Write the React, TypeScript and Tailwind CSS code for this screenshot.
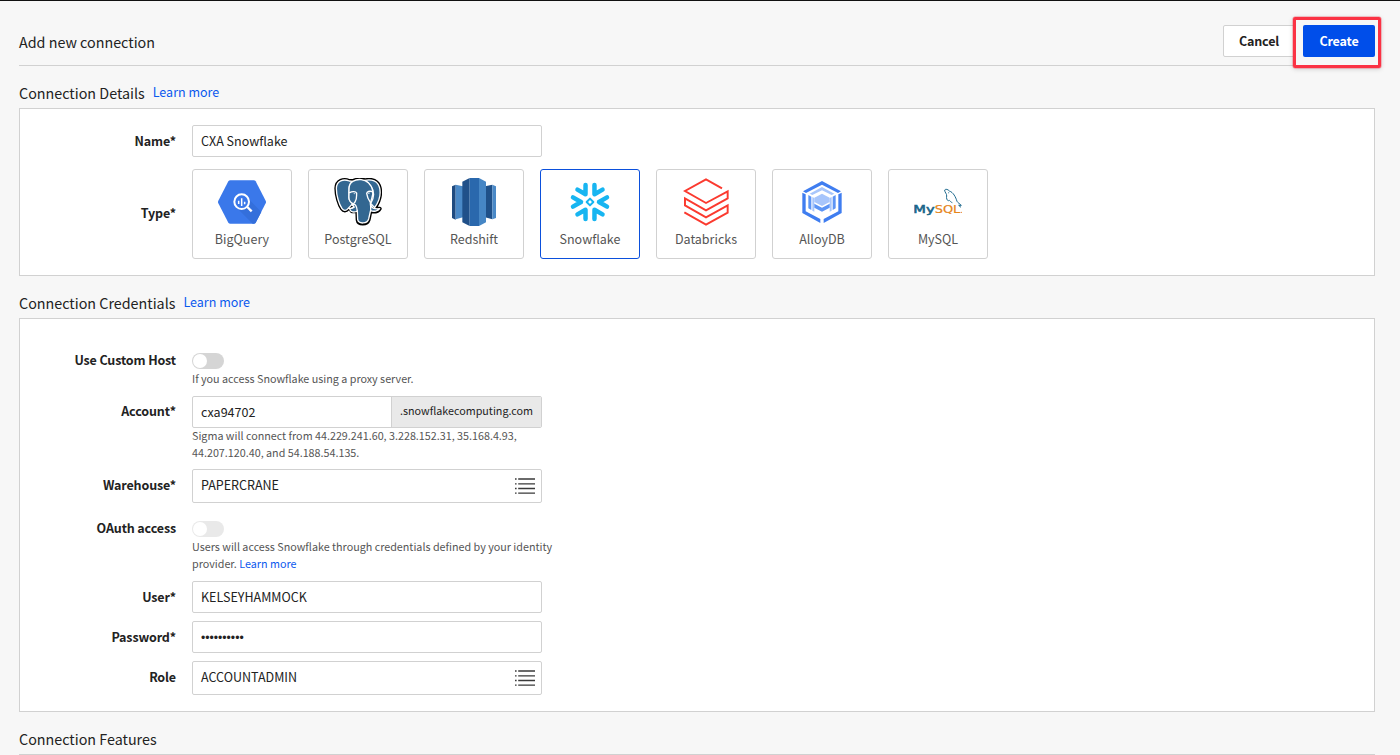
import type { ReactNode } from 'react';

const BigQueryIcon = () => (
  <svg viewBox="84 39 144 144" className="size-12">
    <path d="M121 46H191Q195 46 197 49L227 107Q229 111 227 115L197 173Q195 176 191 176H121Q117 176 115 173L85 115Q83 111 85 107L115 49Q117 46 121 46Z" fill="#3a78ea" />
    <path d="M138 126L188 176H191Q195 176 197 173L214 141L173 99Q178 115 168 124Q155 134 138 126Z" fill="#346fdb" />
    <circle cx="155" cy="110" r="22" fill="none" stroke="#fff" strokeWidth="6" />
    <path d="M172 126L185 139" stroke="#fff" strokeWidth="7" />
    <path d="M146 107V117M155 100V123M164 110V118" stroke="#fff" strokeWidth="4.5" />
  </svg>
);

const PostgresIcon = () => (
  <svg viewBox="432 39 144 144" className="size-12" strokeLinejoin="round" strokeLinecap="round">
    <g fill="#336791" stroke="#000" strokeWidth="12">
      <path d="M478 48C460 41 440 47 439 70C439 91 447 118 456 131C461 138 468 138 474 131L482 123L480 131L486 139L502 138L503 165C505 179 531 180 536 164L541 139C553 141 565 138 569 131C563 131 557 131 555 128C566 111 573 87 569 69C564 48 545 41 526 46C512 42 498 44 489 48Z" />
    </g>
    <g fill="#336791" stroke="#fff" strokeWidth="4">
      <path d="M478 48C460 41 440 47 439 70C439 91 447 118 456 131C461 138 468 138 474 131L488 116C477 108 476 101 477 87C477 70 475 59 488 49Z" />
      <path d="M524 46C545 41 564 48 569 69C573 87 566 111 554 128L542 115C551 101 554 82 544 65C540 57 533 50 524 46Z" />
      <path d="M488 49C504 40 524 43 535 53C549 68 552 84 545 101L541 116L543 131L536 162C532 177 506 178 503 164L502 138C492 144 483 140 480 135C478 130 488 130 491 127L488 116C476 108 476 101 477 87C477 70 475 58 488 49Z" />
      <path d="M542 117C543 129 552 133 569 131C564 138 551 141 542 137Z" />
      <path d="M479 83C487 78 497 79 500 84C499 93 502 102 495 111C492 115 489 118 487 121M546 80C539 77 531 80 530 85C531 93 534 102 541 112M487 120C496 114 500 123 502 138M476 130C483 131 490 128 493 126" fill="none" />
    </g>
    <path d="M490 84L497 86L493 88ZM533 84L540 83L537 87Z" fill="#fff" />
  </svg>
);

const RedshiftIcon = () => (
  <svg viewBox="90 39 144 144" className="size-12">
    <path d="M96 64L107 59V164L96 159Z" fill="#1f4b80" />
    <path d="M107 59L129 64V157L107 163Z" fill="#4a89c7" />
    <path d="M217 59L195 64V157L217 163Z" fill="#1f5089" />
    <path d="M217 59L228 64V159L217 163Z" fill="#4a89c7" />
    <path d="M127 50L149 39V183L127 172Z" fill="#205089" />
    <path d="M149 39H177V183H149Z" fill="#2a68ad" />
    <path d="M177 39L198 50V172L177 183Z" fill="#4686c5" />
  </svg>
);

const SnowflakeIcon = () => (
  <svg viewBox="438 39 144 144" className="size-12" fill="none" stroke="#17b5f1" strokeLinecap="round" strokeLinejoin="round">
    {[0, 60, 120, 180, 240, 300].map((a) => (
      <path key={a} d="M459 97L483 111L459 125" strokeWidth="13.5" transform={`rotate(${a} 510 111)`} />
    ))}
    <path d="M510 101L520 111L510 121L500 111Z" strokeWidth="6" />
  </svg>
);

const DatabricksIcon = () => (
  <svg viewBox="96 39 144 144" className="size-12" fill="none" stroke="#fb3a2f" strokeWidth="5.8">
    <path d="M216 70L168 43L105 78L168 114L233 79V100L168 136L105 100V121L168 157L233 121V143L168 179L103 142" />
  </svg>
);

const AlloyIcon = () => (
  <svg viewBox="444 39 144 144" className="size-12">
    <g fill="#3f7df0">
      <path d="M516 48L573 79L564 84L516 59L468 84L459 79Z" />
      <path d="M457 83L467 88V139L511 162V174L457 144Z" />
      <path d="M575 83L565 88V139L521 162V174L575 144Z" />
    </g>
    <path d="M516 66L553 86L545 90L516 76L487 90L479 86Z" fill="#a7c5fb" />
    <path d="M475 90L484 95V135L475 130ZM557 90L548 95V135L557 130Z" fill="#5c94f5" />
    <path d="M487 96L493 99V140L487 137ZM545 96L539 99V140L545 137Z" fill="#a7c5fb" />
    <path d="M516 86L539 98V111L516 123L493 111V98Z" fill="#a7c5fb" />
    <path d="M493 116L516 128L539 116V128L516 140L493 128Z" fill="#5c94f5" />
  </svg>
);

const MySqlIcon = () => (
  <svg viewBox="102 39 144 144" className="size-12" fontFamily="'DejaVu Sans', sans-serif" fontSize="31">
    <text x="100" y="143" fill="#17658a" stroke="#17658a" strokeWidth="1.6" textLength="64" lengthAdjust="spacingAndGlyphs">My</text>
    <text x="164" y="143" fill="#e6851a" stroke="#e6851a" strokeWidth="0.6" textLength="77" lengthAdjust="spacingAndGlyphs">SQL</text>
    <circle cx="244" cy="142" r="2" fill="#e6851a" />
    <path d="M194 75C197 71 204 73 208 78C220 82 227 96 231 109C233 113 240 117 244 121L236 121L243 127M194 75C194 83 201 86 200 93C198 101 203 110 207 106C208 104 212 112 217 113" fill="none" stroke="#17658a" strokeWidth="2.9" />
    <circle cx="206" cy="83" r="1.6" fill="#17658a" />
  </svg>
);

const ListIcon = () => (
  <svg viewBox="0 0 20 16" className="h-4 w-5 shrink-0" stroke="#3a3a3a" strokeWidth="1.3">
    <path d="M3.2 1H20M3.2 5.8H20M3.2 10.5H20M3.2 15.2H20" />
    <path d="M0 1H1.6M0 5.8H1.6M0 10.5H1.6M0 15.2H1.6" />
  </svg>
);

const TYPES: { name: string; icon: ReactNode; selected?: boolean }[] = [
  { name: 'BigQuery', icon: <BigQueryIcon /> },
  { name: 'PostgreSQL', icon: <PostgresIcon /> },
  { name: 'Redshift', icon: <RedshiftIcon /> },
  { name: 'Snowflake', icon: <SnowflakeIcon />, selected: true },
  { name: 'Databricks', icon: <DatabricksIcon /> },
  { name: 'AlloyDB', icon: <AlloyIcon /> },
  { name: 'MySQL', icon: <MySqlIcon /> },
];

function Row({ label, className, labelClass = 'h-8', children }: { label: string; className?: string; labelClass?: string; children: ReactNode }) {
  return (
    <div className={`flex gap-4 ${className ?? ''}`}>
      <div className={`flex w-[156px] shrink-0 items-center justify-end text-[12.53px] font-bold tracking-[-0.14px] ${labelClass}`}>{label}</div>
      {children}
    </div>
  );
}

function Field({ value, list, masked }: { value: string; list?: boolean; masked?: boolean }) {
  return (
    <div className={`flex w-[350px] items-center justify-between rounded-xs border border-[#d1d1d1] bg-white pr-1.5 pl-2 text-[12.53px] ${list ? 'h-[34px]' : 'h-8'}`}>
      <span className={masked ? "pt-0.5 font-['Liberation_Sans',sans-serif] text-[12.2px]" : list ? 'pb-0.5' : ''}>{value}</span>
      {list && <ListIcon />}
    </div>
  );
}

function Toggle({ disabled }: { disabled?: boolean }) {
  return (
    <div className={`flex h-4 w-8 items-center rounded-full px-px ${disabled ? 'bg-[#e9e9e9]' : 'bg-[#d5d5d5]'}`}>
      <div className="size-3.5 rounded-full bg-white" />
    </div>
  );
}

function Heading({ title, className }: { title: string; className: string }) {
  return (
    <div className={`flex gap-2 ${className}`}>
      <h2 className="text-[14.32px] leading-5">{title}</h2>
      <a className="-mt-px text-[12.53px] leading-5 text-[#0b59ee]">Learn more</a>
    </div>
  );
}

export default function App() {
  return (
    <div className="h-[755px] overflow-hidden border-t border-[#111] bg-[#f7f7f7] pr-[25px] pl-[19px] font-['Noto_Sans_CJK_SC',sans-serif] leading-4 text-[#222]">
      <header className="flex h-[65px] items-start justify-between border-b border-[#d1d1d1] pt-6">
        <h1 className="mt-[7px] text-[14.32px] leading-5">Add new connection</h1>
        <div className="flex gap-2 text-[12.53px] font-bold tracking-[-0.14px]">
          <button className="h-8 w-[72px] rounded-xs border border-[#d1d1d1] bg-white">Cancel</button>
          <div className="relative">
            <button className="h-8 w-[72px] rounded-xs bg-[#004eea] text-white">Create</button>
            <div className="absolute -top-2 -left-2.5 h-[51px] w-[88px] rounded-[2px] border-3 border-[#fb3244] shadow-[0_0_0_0.5px_rgba(251,50,68,0.5),0_1px_5px_rgba(0,0,0,0.18)]" />
          </div>
        </div>
      </header>

      <Heading title="Connection Details" className="mt-[17px] h-[25px]" />
      <section className="h-[168px] border border-[#d1d1d1] bg-white pt-4">
        <Row label="Name*">
          <Field value="CXA Snowflake" />
        </Row>
        <Row label="Type*" className="mt-3" labelClass="h-[88px]">
          <div className="flex gap-4">
            {TYPES.map((t) => (
              <div key={t.name} className={`flex h-[90px] w-[100px] flex-col items-center rounded-[3px] border pt-2 ${t.selected ? 'border-[#0b50dc]' : 'border-[#d1d1d1]'}`}>
                {t.icon}
                <span className="mt-[5px] text-[12.53px] text-[#555]">{t.name}</span>
              </div>
            ))}
          </div>
        </Row>
      </section>

      <Heading title="Connection Credentials" className="mt-[17px] h-[25px]" />
      <section className="h-[394px] border border-[#d1d1d1] bg-white pt-[34px] text-[10.76px]">
        <Row label="Use Custom Host" labelClass="h-3.5">
          <div>
            <Toggle />
            <p className="mt-px mb-px leading-[17px] text-[#555]">If you access Snowflake using a proxy server.</p>
          </div>
        </Row>
        <Row label="Account*" className="mt-2" labelClass="h-[30px]">
          <div>
            <div className="flex h-8 w-[350px] overflow-hidden rounded-xs border border-[#d1d1d1]">
              <span className="flex grow items-center pl-2 text-[12.53px]">cxa94702</span>
              <span className="flex w-[150px] items-center justify-center border-l border-[#d1d1d1] bg-[#e9e9e9] pb-0.5">.snowflakecomputing.com</span>
            </div>
            <p className="-mt-px mb-px w-[350px] leading-[17px] text-[#555]">Sigma will connect from 44.229.241.60, 3.228.152.31, 35.168.4.93, 44.207.120.40, and 54.188.54.135.</p>
          </div>
        </Row>
        <Row label="Warehouse*" className="mt-[7px]">
          <Field value="PAPERCRANE" list />
        </Row>
        <Row label="OAuth access" className="mt-[18px]" labelClass="h-3.5">
          <div>
            <Toggle disabled />
            <p className="mt-px mb-px w-[370px] leading-[17px] text-[#555]">
              Users will access Snowflake through credentials defined by your identity
              <br />
              provider. <a className="text-[#0b59ee]">Learn more</a>
            </p>
          </div>
        </Row>
        <Row label="User*" className="mt-2">
          <Field value="KELSEYHAMMOCK" />
        </Row>
        <Row label="Password*" className="mt-2">
          <Field value="••••••••••" masked />
        </Row>
        <Row label="Role" className="mt-2">
          <Field value="ACCOUNTADMIN" list />
        </Row>
      </section>

      <h2 className="mt-[17px] h-[25px] text-[14.32px] leading-5">Connection Features</h2>
      <section className="h-20 border border-[#d1d1d1] bg-white" />
    </div>
  );
}
